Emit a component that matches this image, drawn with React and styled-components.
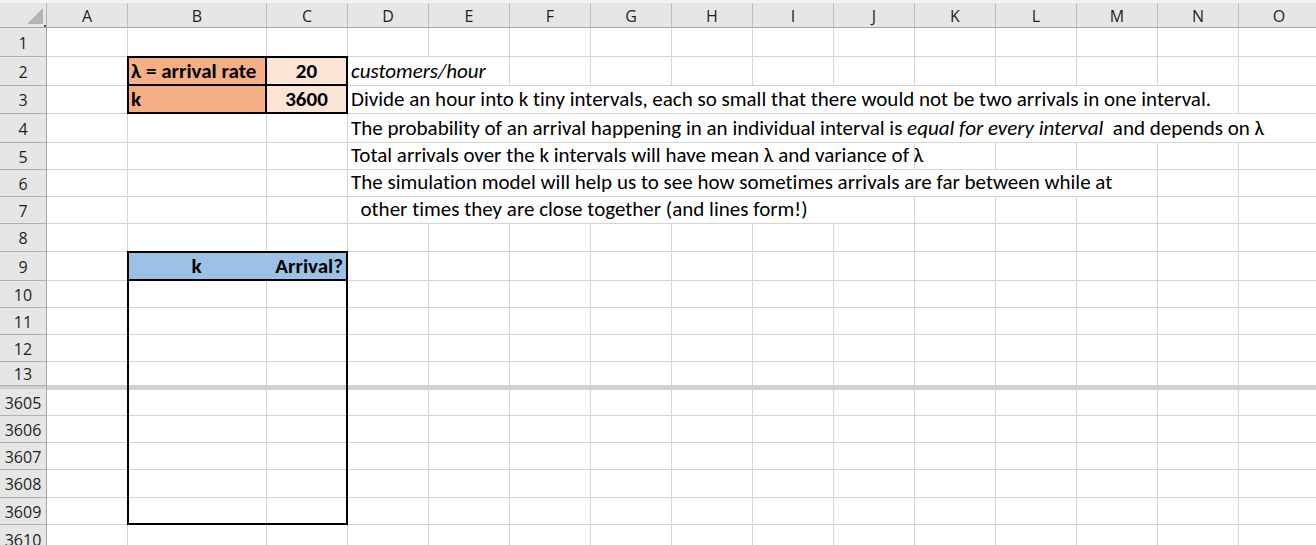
import React from "react";
import styled, { createGlobalStyle } from "styled-components";

const ORANGE = "#f4b084";
const PEACH = "#fce4d6";
const BLUE = "#9bc2e6";
const GRID = "#d4d4d4";
const FREEZE = "#d0d0d0";

const COLUMNS = [
  ["A", 81], ["B", 139], ["C", 81], ["D", 81], ["E", 81], ["F", 81], ["G", 81],
  ["H", 81], ["I", 81], ["J", 81], ["K", 81], ["L", 81], ["M", 81], ["N", 81], ["O", 81],
];

const tableRow = (label, h, bottom) => ({
  label,
  h,
  cells: { B: { b: bottom ? "lb" : "l" }, C: { b: bottom ? "rb" : "r" } },
});

const ROWS = [
  { label: "1", h: 29 },
  {
    label: "2",
    h: 29,
    cells: {
      B: { text: "λ = arrival rate", bold: true, fill: ORANGE, b: "tlrb" },
      C: { text: "20", bold: true, align: "center", fill: PEACH, b: "trb" },
      D: { text: "customers/hour", italic: true, span: 2 },
    },
  },
  {
    label: "3",
    h: 28,
    cells: {
      B: { text: "k", bold: true, fill: ORANGE, b: "lrb" },
      C: { text: "3600", bold: true, align: "center", fill: PEACH, b: "rb" },
      D: {
        text: "Divide an hour into k tiny intervals, each so small that there would not be two arrivals in one interval.",
        span: 11,
      },
    },
  },
  {
    label: "4",
    h: 29,
    cells: {
      D: {
        text: [
          "The probability of an arrival happening in an individual interval is ",
          <i key="i">equal for every interval</i>,
          "  and depends on λ",
        ],
        span: 12,
      },
    },
  },
  {
    label: "5",
    h: 27,
    cells: { D: { text: "Total arrivals over the k intervals will have mean λ and variance of λ", span: 7 } },
  },
  {
    label: "6",
    h: 27,
    cells: {
      D: { text: "The simulation model will help us to see how sometimes arrivals are far between while at", span: 10 },
    },
  },
  {
    label: "7",
    h: 27,
    cells: { D: { text: "  other times they are close together (and lines form!)", span: 7 } },
  },
  { label: "8", h: 28 },
  {
    label: "9",
    h: 29,
    cells: {
      B: { text: "k", bold: true, align: "center", fill: BLUE, b: "tlb" },
      C: { text: "Arrival?", bold: true, align: "right", fill: BLUE, b: "trb" },
    },
  },
  tableRow("10", 27),
  tableRow("11", 27),
  tableRow("12", 27),
  tableRow("13", 24),
  { freeze: true, h: 3, cells: { B: { b: "l", fill: FREEZE }, C: { b: "r", fill: FREEZE } } },
  tableRow("3605", 27),
  tableRow("3606", 27),
  tableRow("3607", 27),
  tableRow("3608", 28),
  tableRow("3609", 27, true),
  { label: "3610", h: 30 },
];

const GlobalStyle = createGlobalStyle`
  html, body {
    margin: 0;
    padding: 0;
    background: #ffffff;
    overflow: hidden;
  }
`;

const Sheet = styled.div`
  width: 1316px;
  height: 545px;
  overflow: hidden;
  display: flex;
  flex-direction: column;
  font-family: Carlito, Calibri, Lato, sans-serif;
  font-variant-ligatures: none;
  font-feature-settings: "liga" 0, "clig" 0;
  color: #000;
`;

const TopStrip = styled.div`
  height: 3px;
  flex: none;
  background: #f3f3f3;
`;

const Row = styled.div`
  display: flex;
  flex: none;
  height: ${(p) => p.$h}px;
  background: ${(p) => (p.$freeze ? FREEZE : "transparent")};
`;

const HeadBase = styled.div`
  box-sizing: border-box;
  flex: none;
  display: flex;
  align-items: center;
  justify-content: center;
  background: #e6e6e6;
  font-family: "Open Sans", "Noto Sans", sans-serif;
  font-size: 16px;
  color: #1f1f1f;
`;

const Corner = styled(HeadBase)`
  width: 47px;
  height: 25px;
  justify-content: flex-end;
  align-items: flex-end;
  border-right: 1px solid #b5b5b5;
  border-bottom: 1px solid #a6a6a6;
  position: relative;

  &::before {
    content: "";
    width: 0;
    height: 0;
    margin: 0 3px 3px 0;
    border-left: 16px solid transparent;
    border-bottom: 16px solid #b4b4b4;
  }

  &::after {
    content: "";
    position: absolute;
    right: 0;
    bottom: 0;
    width: 2px;
    height: 2px;
    background: #217346;
  }
`;

const ColHead = styled(HeadBase)`
  width: ${(p) => p.$w}px;
  height: 25px;
  border-right: 1px solid #bfbfbf;
  border-bottom: 1px solid #a6a6a6;
  padding-top: 1px;
`;

const RowHead = styled(HeadBase)`
  width: 47px;
  height: 100%;
  border-right: 1px solid #a6a6a6;
  border-bottom: 1px solid ${(p) => (p.$freeze ? FREEZE : "#b0b0b0")};
  background: ${(p) => (p.$freeze ? FREEZE : "#e6e6e6")};
  padding-top: 1px;
`;

const thick = (on) => (on ? "2px solid #000" : "0 none");

const Cell = styled.div`
  box-sizing: border-box;
  position: relative;
  flex: none;
  width: ${(p) => p.$w}px;
  height: 100%;
  display: flex;
  align-items: flex-end;
  justify-content: ${(p) =>
    p.$align === "center" ? "center" : p.$align === "right" ? "flex-end" : "flex-start"};
  padding: 0 4px 3px 3px;
  background: ${(p) => p.$fill || "transparent"};
  border-right: 1px solid ${(p) => (p.$fill ? "transparent" : GRID)};
  border-bottom: 1px solid ${(p) => (p.$fill ? "transparent" : GRID)};
  font-size: 21px;
  line-height: 21px;
  font-weight: ${(p) => (p.$bold ? 700 : 400)};
  font-style: ${(p) => (p.$italic ? "italic" : "normal")};
  white-space: pre;

  &::after {
    content: "";
    position: absolute;
    top: -1px;
    left: -1px;
    right: -1px;
    bottom: -1px;
    z-index: 1;
    pointer-events: none;
    border-top: ${(p) => thick(p.$edges.includes("t"))};
    border-left: ${(p) => thick(p.$edges.includes("l"))};
    border-right: ${(p) => thick(p.$edges.includes("r"))};
    border-bottom: ${(p) => thick(p.$edges.includes("b"))};
  }
`;

const Text = styled.span`
  display: block;
`;

const renderCells = (row) => {
  const defs = row.cells || {};
  const out = [];
  for (let i = 0; i < COLUMNS.length; ) {
    const [key] = COLUMNS[i];
    const def = defs[key] || {};
    const span = def.span || 1;
    const w = COLUMNS.slice(i, i + span).reduce((s, c) => s + c[1], 0);
    out.push(
      <Cell
        key={key}
        $w={w}
        $fill={def.fill || (row.freeze ? FREEZE : undefined)}
        $bold={def.bold}
        $italic={def.italic}
        $align={def.align}
        $edges={def.b || ""}
      >
        {def.text ? <Text>{def.text}</Text> : null}
      </Cell>
    );
    i += span;
  }
  return out;
};

const App = () => {
  return (
    <>
      <GlobalStyle />
      <Sheet>
        <TopStrip />
        <Row $h={25}>
          <Corner />
          {COLUMNS.map(([name, w]) => (
            <ColHead key={name} $w={w}>
              {name}
            </ColHead>
          ))}
        </Row>
        {ROWS.map((row, idx) => (
          <Row key={idx} $h={row.h} $freeze={row.freeze}>
            <RowHead $freeze={row.freeze}>{row.label}</RowHead>
            {renderCells(row)}
          </Row>
        ))}
      </Sheet>
    </>
  );
};

export default App;
